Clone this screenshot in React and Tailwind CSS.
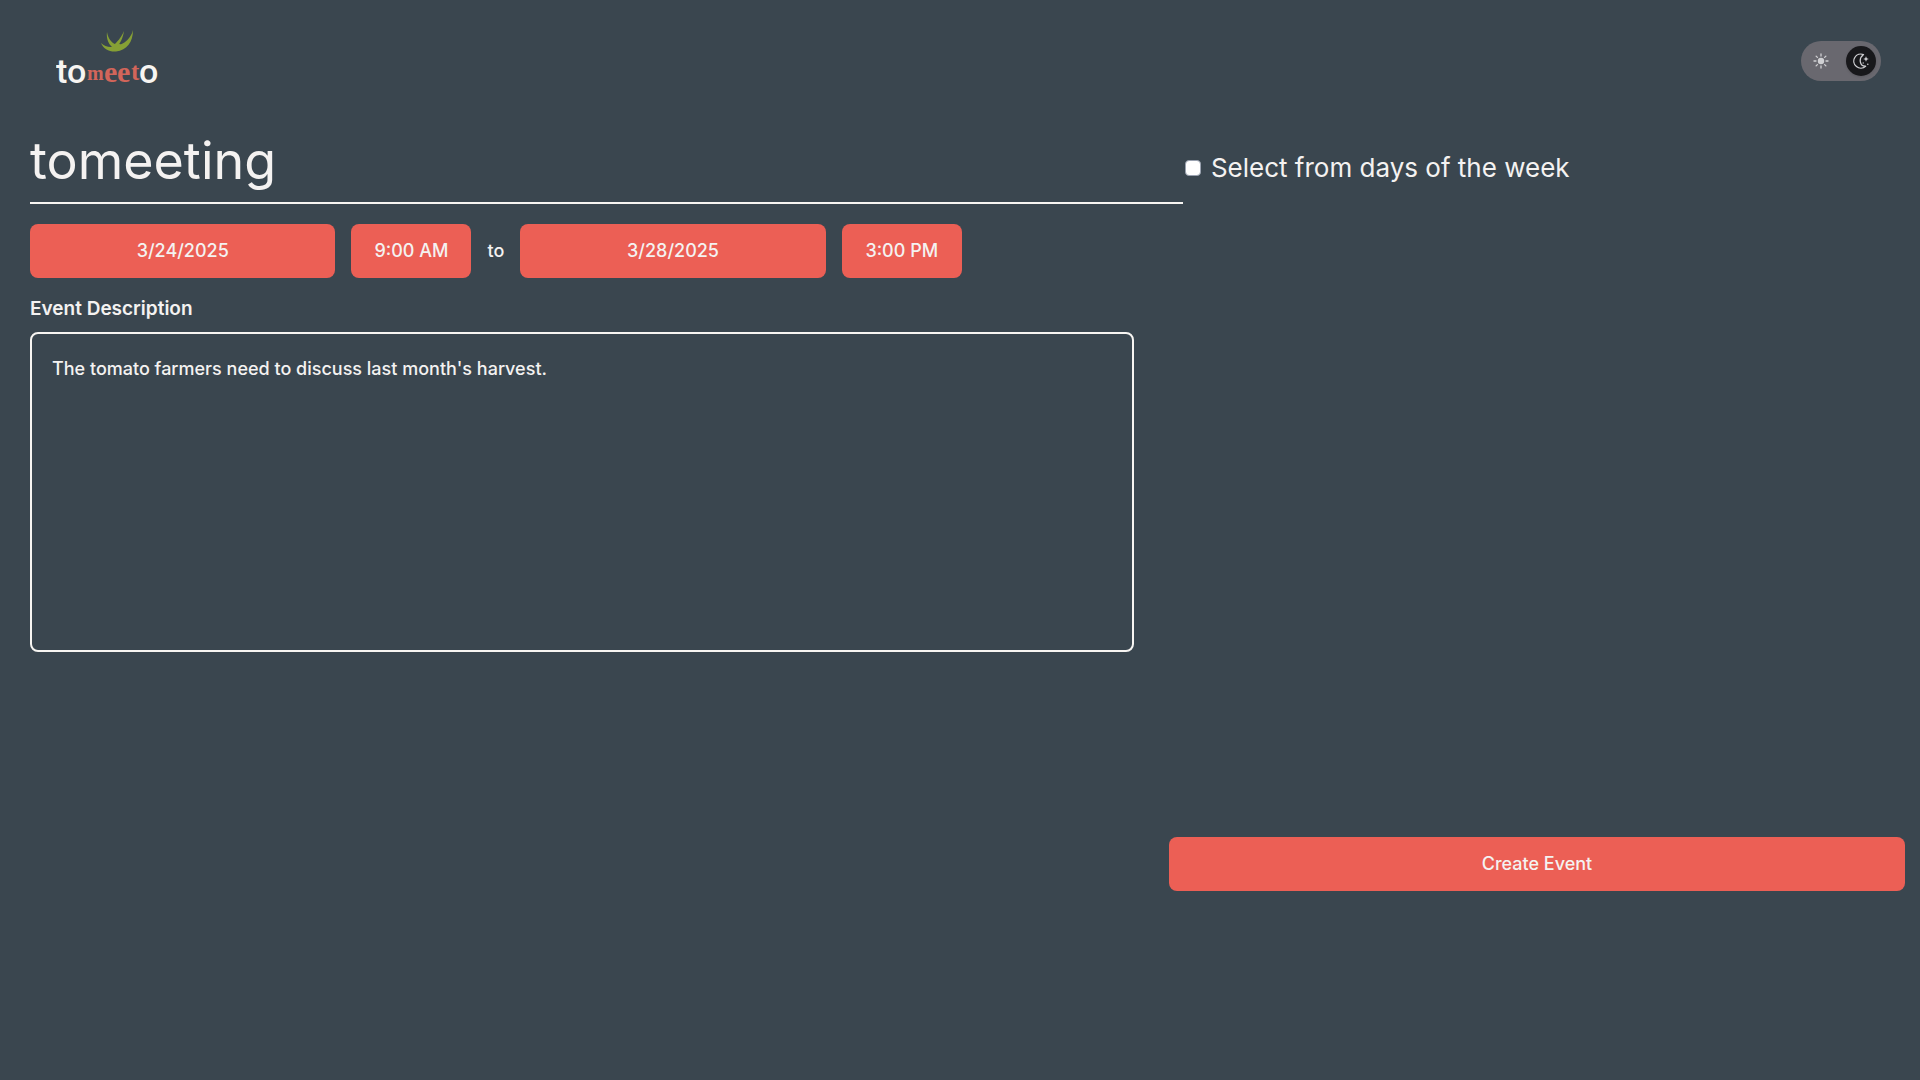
import { useState } from "react";

function Logo() {
  return (
    <svg
      role="img"
      aria-label="tomeeto"
      viewBox="0 0 104 64"
      className="h-16 w-[104px]"
      fill="none"
    >
      <g fill="#f7f5f2" fontFamily="Roboto, sans-serif" fontSize="34" fontWeight="500">
        <text x="0" y="53">to</text>
        <text x="83" y="53">o</text>
      </g>
      <g fill="#d2655a" fontFamily="'Liberation Serif', serif" fontWeight="700">
        <text x="31" y="50" fontSize="20">m</text>
        <text x="48" y="52" fontSize="30">e</text>
        <text x="61" y="52" fontSize="30">e</text>
        <text x="75" y="50" fontSize="25">t</text>
      </g>
      <g fill="#86a035">
        <path d="M45 13c4 4 10 5 15 3C69 14 75 8 77 0c0 12-6 20-17 21.500-7 .5-13-3-15-8.500Z" />
        <path d="M51 2c1 6 4 11 10 13l-2 4C53 16 50 9 51 2Z" />
        <path d="M68 1c-1 7-4 13-8 17l-3-2c4-4 8-8 11-15Z" />
        <path d="M56 15l8-1 4 4-9 3Z" />
      </g>
    </svg>
  );
}

function SunIcon() {
  return (
    <svg viewBox="0 0 16 16" className="size-4" fill="#d0d0d3" stroke="#d0d0d3" strokeWidth="1.3" strokeLinecap="round">
      <circle cx="8" cy="8" r="3.2" stroke="none" />
      <path d="M8 1v2M8 13v2M1 8h2M13 8h2M3.1 3.1l1.3 1.3M11.6 11.6l1.3 1.3M3.1 12.9l1.3-1.3M11.6 4.4l1.3-1.3" />
    </svg>
  );
}

function MoonIcon() {
  return (
    <svg viewBox="0 0 16 16" className="size-4" fill="none">
      <path
        d="M10.500 1.600A7 7 0 1 0 12.600 13.200C7 13.500 5 6 10.500 1.600Z"
        stroke="#d0d0d3"
        strokeWidth="1.3"
        strokeLinejoin="round"
      />
      <path d="M13 3.2l.8 2 2 .8-2 .8-.8 2-.8-2-2-.8 2-.8Z" fill="#d4d4d8" />
      <circle cx="10.2" cy="10" r=".7" fill="#c9c9cc" />
      <circle cx="14.8" cy="11.3" r=".8" fill="#c9c9cc" />
    </svg>
  );
}

function ThemeSwitch() {
  const [dark, setDark] = useState(true);
  return (
    <button
      type="button"
      role="switch"
      aria-checked={dark}
      aria-label="Dark mode"
      onClick={() => setDark(!dark)}
      className="flex h-10 w-20 items-center justify-between rounded-full bg-[#69686f] px-[5px]"
    >
      <span className="flex size-[30px] items-center justify-center">
        <SunIcon />
      </span>
      <span className="flex size-[30px] items-center justify-center rounded-full bg-[#18181b] shadow">
        <MoonIcon />
      </span>
    </button>
  );
}

const red = "h-[54px] rounded-lg bg-[#ec5f55] text-center text-[#f4f2f1]";

export default function App() {
  const [title, setTitle] = useState("tomeeting");
  const [description, setDescription] = useState(
    "The tomato farmers need to discuss last month's harvest."
  );
  return (
    <div className="min-h-screen bg-[#3a464f] font-['Inter',sans-serif] text-lg font-medium text-[#f4f2f1]">
      <header className="flex items-start justify-between pt-[30px] pr-[39px] pl-[56px]">
        <Logo />
        <div className="pt-[11px]">
          <ThemeSwitch />
        </div>
      </header>

      <main>
        <div className="flex items-center pt-[30px] pl-[30px]">
          <input
            type="text"
            aria-label="Event name"
            value={title}
            onChange={(e) => setTitle(e.target.value)}
            className="h-20 w-[61%] border-b-2 border-[#f7f5f2] bg-transparent pb-1 text-[52px] font-normal outline-none"
          />
          <label className="flex items-center gap-[10px] pt-2 pl-0.5 text-[26px] leading-10 font-normal">
            <input
              type="checkbox"
              className="size-4 appearance-none rounded border border-gray-400 bg-white checked:bg-[#ec5f55]"
            />
            Select from days of the week
          </label>
        </div>

        <div className="grid grid-cols-[3fr_2fr] gap-x-[35px] pt-5 pr-[15px] pl-[30px]">
          <section className="flex flex-col">
            <div className="flex w-[84.4%] items-center gap-4">
              <button type="button" className={`${red} flex-1`}>3/24/2025</button>
              <button type="button" className={`${red} w-[120px]`}>9:00 AM</button>
              <span>to</span>
              <button type="button" className={`${red} flex-1`}>3/28/2025</button>
              <button type="button" className={`${red} w-[120px]`}>3:00 PM</button>
            </div>
            <label htmlFor="description" className="pt-4 pb-2 text-[19px] leading-[30px] font-semibold">
              Event Description
            </label>
            <textarea
              id="description"
              value={description}
              onChange={(e) => setDescription(e.target.value)}
              className="h-80 w-full resize-none rounded-lg border-2 border-[#f7f5f2] bg-transparent px-5 py-5 leading-[30px] outline-none"
            />
          </section>
          <section className="flex flex-col pt-[613px]">
            <button type="button" className={red}>Create Event</button>
          </section>
        </div>
      </main>
    </div>
  );
}
